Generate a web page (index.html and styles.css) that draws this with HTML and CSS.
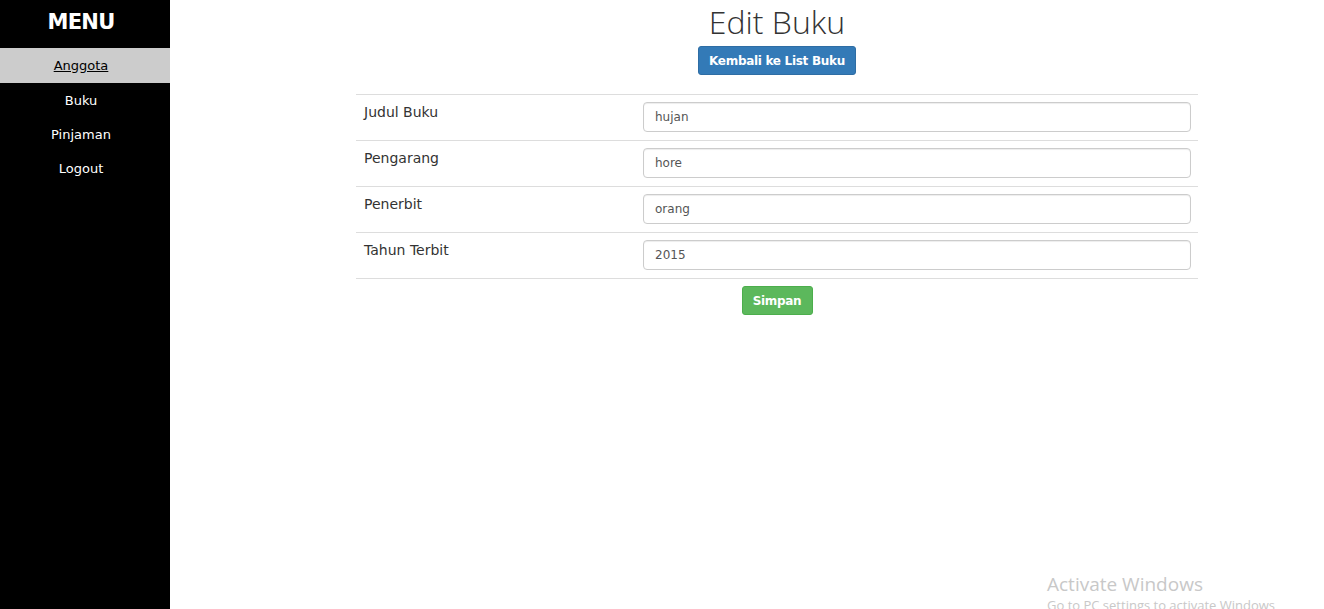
FILE: index.html
```html
<!DOCTYPE html>
<html>
<head>
<meta charset="utf-8">
<link rel="stylesheet" href="styles.css">
</head>
<body>
<div class="layout">
  <nav class="sidebar">
    <h2 class="menu-title">MENU</h2>
    <ul class="menu">
      <li class="menu-item active"><a href="#">Anggota</a></li>
      <li class="menu-item"><a href="#">Buku</a></li>
      <li class="menu-item"><a href="#">Pinjaman</a></li>
      <li class="menu-item"><a href="#">Logout</a></li>
    </ul>
  </nav>
  <main class="main">
    <h1 class="title">Edit Buku</h1>
    <div class="center"><a class="btn btn-primary" href="#">Kembali ke List Buku</a></div>
    <table class="form-table">
      <tr><td class="label">Judul Buku</td><td class="field"><input class="input" value="hujan"></td></tr>
      <tr><td class="label">Pengarang</td><td class="field"><input class="input" value="hore"></td></tr>
      <tr><td class="label">Penerbit</td><td class="field"><input class="input" value="orang"></td></tr>
      <tr><td class="label">Tahun Terbit</td><td class="field"><input class="input" value="2015"></td></tr>
    </table>
    <div class="center"><button class="btn btn-success">Simpan</button></div>
  </main>
</div>
<div class="watermark">
  <div class="wm-title">Activate Windows</div>
  <div class="wm-sub">Go to PC settings to activate Windows</div>
</div>
</body>
</html>
```
FILE: styles.css
```css
html, body { margin: 0; padding: 0; height: 100%; overflow: hidden; }
body { font-family: "DejaVu Sans", Verdana, sans-serif; color: #333; background: #fff; }
.layout { display: flex; height: 609px; }
.sidebar { width: 170px; flex: none; background: #000; }
.menu-title { margin: 0 8px 0 0; padding-top: 10px; height: 48px; box-sizing: border-box; text-align: center; color: #fff; font-size: 21px; font-weight: bold; letter-spacing: -0.7px; }
.menu { list-style: none; margin: 0; padding: 0; }
.menu-item { height: 34.3px; display: flex; align-items: center; justify-content: center; font-size: 13px; padding-right: 8px; }
.menu-item a { color: #fff; text-decoration: none; }
.menu-item.active { background: #ccc; height: 35px; }
.menu-item.active a { color: #000; text-decoration: underline; }
.main { flex: 1; padding-left: 60px; }
.title { margin: 2px 0 0; font-family: "Open Sans", sans-serif; font-weight: 300; font-size: 32px; text-align: center; line-height: 40px; color: #333; }
.center { display: flex; justify-content: center; }
.btn { display: inline-flex; align-items: center; justify-content: center; height: 29px; box-sizing: border-box; padding: 0 10px; border-radius: 3px; font-family: "DejaVu Sans", sans-serif; font-size: 12px; font-weight: bold; color: #fff; text-decoration: none; border: 1px solid; letter-spacing: -0.3px; }
.btn-primary { margin-top: 4px; background: #337ab7; border-color: #2e6da4; }
.btn-success { margin-top: 7px; background: #5cb85c; border-color: #4cae4c; width: 71px; padding: 0; }
.form-table { width: 842px; margin: 19px auto 0; border-collapse: collapse; }
.form-table td { border-top: 1px solid #ddd; padding: 7px 8px 8px; vertical-align: top; height: 30px; }
.form-table tr:last-child td { border-bottom: 1px solid #ddd; }
.label { width: 263px; font-size: 14px; line-height: 20px; color: #333; }
.field { padding-right: 7px !important; }
.input { display: block; width: 100%; height: 30px; box-sizing: border-box; border: 1px solid #ccc; border-radius: 4px; padding: 0 11px; font-family: "DejaVu Sans", sans-serif; font-size: 12px; color: #555; box-shadow: inset 0 1px 1px rgba(0,0,0,.075); }
.watermark { position: absolute; left: 1047px; top: 572px; font-family: "Open Sans", sans-serif; color: #c8c8c8; white-space: nowrap; }
.wm-title { font-size: 19px; line-height: 24px; }
.wm-sub { font-size: 13px; line-height: 18px; }
```
